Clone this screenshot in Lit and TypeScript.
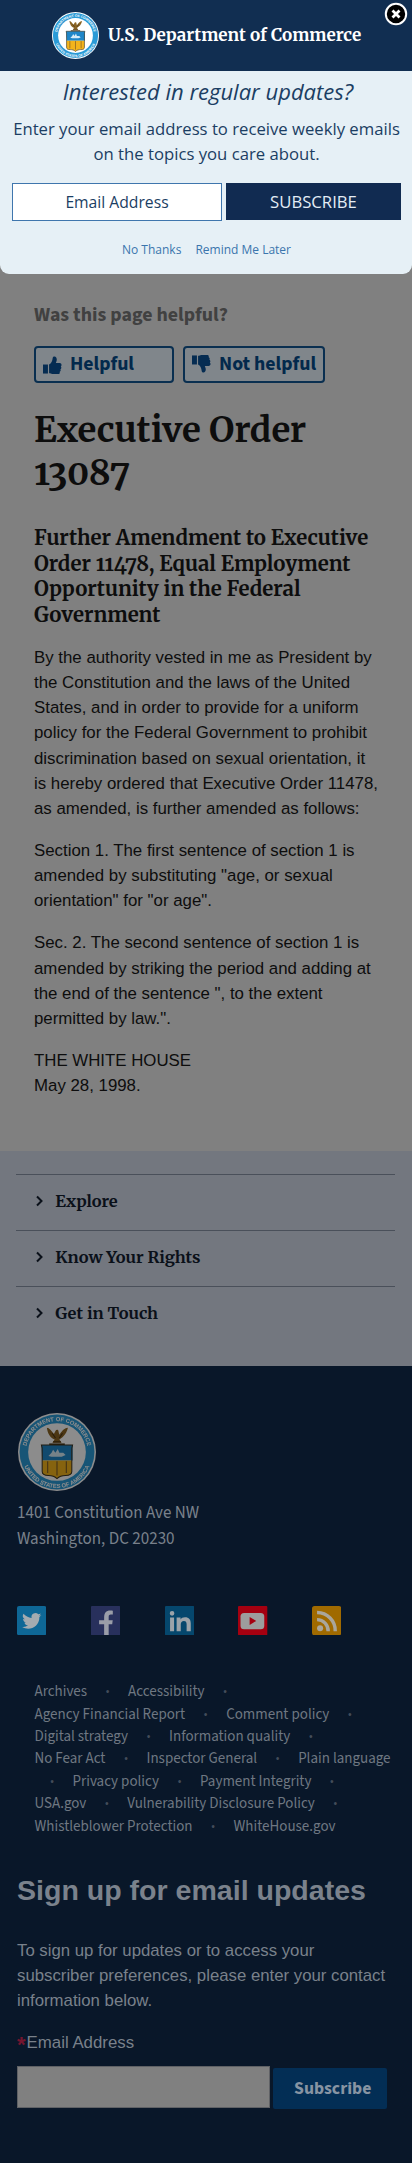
import { LitElement, html, css, svg } from "lit";
import { customElement } from "lit/decorators.js";

@customElement("commerce-seal")
class CommerceSeal extends LitElement {
  static styles = css`
    :host { display: block; flex: none; }
    svg { display: block; width: 100%; height: 100%; }
    .ring { font: bold 7.400px "Liberation Sans", sans-serif; fill: #fff; text-anchor: middle; }
  `;

  render() {
    return html`<svg viewBox="0 0 100 100" aria-label="Department of Commerce seal">
      <defs>
        <path id="top" d="M10.500 54a39.700 39.700 0 1 1 79 0" />
        <path id="bottom" d="M4.800 51a45.200 45.200 0 0 0 90.400 0" />
      </defs>
      <circle cx="50" cy="50" r="50" fill="#fff" />
      <circle cx="50" cy="50" r="48" fill="#2a9ad6" />
      <circle cx="50" cy="50" r="37" fill="#fff" />
      <text class="ring"><textPath href="#top" startOffset="50%">DEPARTMENT OF COMMERCE</textPath></text>
      <text class="ring"><textPath href="#bottom" startOffset="50%">UNITED STATES OF AMERICA</textPath></text>
      <path d="M37 19c3 0 6 4 9 8l2-4c1-2 4-2 4 1l1 4c3-4 6-9 11-9-1 4-3 9-7 12l-4 3 3 4H44l3-4c-6-2-9-8-10-15z" fill="#8a6424" />
      <path d="M44 26l4 6M57 26l-4 6M45 37h10" stroke="#4a3413" stroke-width="1.4" />
      <path d="M40 40h20" stroke="#4a3413" stroke-width="2" />
      <path d="M30 41h40v20H31z" fill="#1f86c8" />
      <path d="M31 61h38v14c0 4-3 5-8 5-4 0-8 1-11 4-3-3-7-4-11-4-5 0-8-1-8-5z" fill="#f3b41c" />
      <path d="M30 41h40l-1 4v30c0 4-3 5-8 5-4 0-8 1-11 4-3-3-7-4-11-4-5 0-8-1-8-5V45z" fill="none" stroke="#3d3420" stroke-width="1.3" />
      <path d="M39 55l4-4 2-4 3 4 3-5 2 5 5 0 3 3-5 2H43z" fill="#d7ecf8" />
      <path d="M50 62v18M38 62v15M62 62v15" stroke="#8a6424" stroke-width="1.6" />
    </svg>`;
  }
}

const thumb = svg`
  <path d="M0 8.500h5.200v9.500H0z" />
  <path d="M6.400 8.400C8.800 7.200 9.800 5 10.200 1.600 10.400.3 11.300 0 12 0c1.700 0 2.500 1.600 2.500 3.200 0 1.500-.6 2.600-1 3.800h4c1.300 0 2 1 2 1.900 0 .8-.4 1.300-.8 1.600.4.4.6.8.6 1.400 0 .9-.5 1.400-1 1.700.3.4.4.8.3 1.300-.1.7-.5 1.100-1 1.300.3 1.600-.5 2.800-2.600 2.800h-2.300c-2.400 0-4.100-1-5.500-1.200h-.8z" />
`;

const SECTIONS = ["Explore", "Know Your Rights", "Get in Touch"];

const DOT = "•";
const LINK_ROWS: string[][] = [
  ["Archives", DOT, "Accessibility", DOT],
  ["Agency Financial Report", DOT, "Comment policy", DOT],
  ["Digital strategy", DOT, "Information quality", DOT],
  ["No Fear Act", DOT, "Inspector General", DOT, "Plain language"],
  [DOT, "Privacy policy", DOT, "Payment Integrity", DOT],
  ["USA.gov", DOT, "Vulnerability Disclosure Policy", DOT],
  ["Whistleblower Protection", DOT, "WhiteHouse.gov"],
];

const SOCIAL = [
  svg`<rect width="29" height="29" rx="2" fill="#0e6796" />
    <path transform="translate(4.500 4.800) scale(.83)" fill="#a4abb0" d="M23.600 4.900c-.8.400-1.700.6-2.700.8 1-.6 1.700-1.500 2-2.600-.9.500-1.900.9-2.900 1.100a4.700 4.700 0 0 0-8 4.300C8.100 8.300 4.600 6.400 2.300 3.600a4.700 4.700 0 0 0 1.500 6.300c-.8 0-1.500-.2-2.100-.6 0 2.300 1.600 4.200 3.800 4.700-.7.200-1.400.2-2.100.1.600 1.800 2.300 3.200 4.400 3.200A9.500 9.500 0 0 1 .8 19.200C8.700 24.200 21.300 20 21.300 7.300c.9-.6 1.700-1.500 2.300-2.400z" />`,
  svg`<rect width="29" height="29" rx="1" fill="#28305c" />
    <path fill="#9a9da8" d="M13 29V18H8v-4h5v-2.500C13 7 15 4.500 19 4.500c1 0 2 .1 2.600.2v3.800h-2c-1.700 0-2.100.9-2.100 2.300V14h4l-.5 4h-3.500v11z" />`,
  svg`<rect width="29" height="29" rx="1" fill="#05476d" />
    <path fill="#9ba3a9" d="M5 11.500h4V25H5zM7 5a2.300 2.300 0 1 1 0 4.600A2.300 2.300 0 0 1 7 5zM11.500 11.500h3.900v1.800c.8-1.300 2.200-2.200 4.400-2.200 4 0 5.700 2.300 5.700 6.200V25h-4.100v-7c0-2-.8-3.200-2.700-3.200-2 0-3.100 1.300-3.100 3.300V25h-4.100z" />`,
  svg`<rect width="29" height="29" rx="1" fill="#a50010" />
    <rect x="2.500" y="7" width="23.500" height="16" rx="3.500" fill="#9d9d9d" />
    <path fill="#a50010" d="M11.500 10.800l6.500 4-6.500 4z" />`,
  svg`<rect width="29" height="29" rx="2.500" fill="#a06a00" />
    <circle cx="8" cy="22" r="3" fill="#aaa69c" />
    <path d="M5 13.500a11 11 0 0 1 11 11.500M5 6.500a18 18 0 0 1 18 18.500" fill="none" stroke="#aaa69c" stroke-width="3.400" />`,
];

@customElement("app-root")
class AppRoot extends LitElement {
  static styles = css`
    :host {
      display: flex;
      flex-direction: column;
      box-sizing: border-box;
      width: 100%;
      height: 2163px;
      background: #808080;
      color: #0d0d0d;
      font: 16.830px/25.200px "Liberation Sans", Arial, sans-serif;
    }
    * { box-sizing: border-box; }
    h1, h2, h3, p { margin: 0; padding: 0; }
    .banner { position: relative; height: 71px; flex: none; display: flex; align-items: flex-start; gap: 9px; padding: 12px 0 0 52px; background: #112e51; }
    .banner commerce-seal { width: 47px; height: 47px; }
    .brand { color: #fff; font: bold 17.100px/26px Merriweather, serif; padding-top: 10px; white-space: nowrap; }
    .close { position: absolute; right: 4px; top: 2px; width: 24px; height: 24px; }
    .popup { height: 203px; flex: none; background: #e6f0f6; border-radius: 0 0 9px 9px; text-align: center; color: #1b3e63; font-family: "Open Sans", sans-serif; padding: 5px 11px 0 12px; }
    .popup-title { font-size: 22px; line-height: 30px; font-style: italic; padding-left: 3px; }
    .popup-text { font-size: 16.700px; line-height: 25px; margin: 10px -4px 0; }
    .form { display: flex; gap: 4px; margin-top: 17px; height: 38px; }
    .field { width: 210px; background: #fff; border: 1px solid #3f76ad; font-size: 15.700px; line-height: 36px; }
    .cta { width: 175px; height: 37px; background: #112b51; color: #e4edf6; font-size: 16.700px; line-height: 37px; }
    .choices { display: flex; justify-content: center; gap: 14px; margin-top: 20px; font-size: 12px; line-height: 18px; color: #3a75ad; }
    main { padding: 26px 34px 0; height: 877px; flex: none; }
    .ask { font: bold 19.850px/30px "Source Sans 3", sans-serif; color: #414141; }
    .votes { display: flex; gap: 9px; margin-top: 16px; }
    .vote { display: flex; align-items: center; height: 37px; border: 2px solid #0a2f50; border-radius: 4px; background: #80868b; color: #03294c; font: bold 19.750px/33px "Source Sans 3", sans-serif; padding: 0 0 0 7px; gap: 8px; width: 140px; white-space: nowrap; }
    .vote.no { width: 142px; }
    .vote svg { width: 19px; height: 18px; fill: #052c52; margin-top: 1px; }
    .no svg { transform: scaleY(-1); margin-top: -1px; }
    h1 { font: bold 34.750px/43.400px Merriweather, serif; font-feature-settings: "onum"; margin-top: 25px; }
    h2 { font: bold 20.350px/25.500px Merriweather, serif; font-feature-settings: "onum"; margin-top: 31.500px; width: 350px; }
    .body { margin-top: 16.500px; display: flex; flex-direction: column; gap: 16.800px; margin-right: -1px; }
    nav { background: #73777f; height: 215px; flex: none; padding: 23px 17px 0 16px; }
    .section { display: flex; align-items: center; height: 55.750px; border-top: 1px solid #4a505a; padding: 0 0 2px 20px; gap: 12.300px; font: bold 16.400px/52px Merriweather, serif; color: #0a1019; }
    .section svg { width: 7px; height: 12px; }
    .chev { fill: none; stroke: #0a1019; stroke-width: 2; }
    footer { background: #091729; color: #79818b; flex: 1; padding: 46.500px 17px 0; }
    .seal { width: 78px; height: 78px; margin-left: 1px; filter: brightness(.55); }
    .address { font: 17px/26px "Source Sans 3", sans-serif; margin-top: 9px; }
    .social { display: flex; gap: 44.500px; margin-top: 54.500px; }
    .social svg { width: 29.300px; height: 29.300px; flex: none; }
    .links { margin: 46px 0 0 17.500px; font: 15px/22.400px "Source Sans 3", sans-serif; color: #6f7782; }
    .row { display: flex; height: 22.400px; white-space: nowrap; }
    .dot { width: 41px; text-align: center; font-size: 12px; color: #434c59; }
    .row .dot:first-child { width: 38px; padding-right: 3px; }
    h3 { font: bold 28.550px/34px "Liberation Sans", sans-serif; margin-top: 35px; color: #7b828c; }
    .intro { margin-top: 31px; white-space: nowrap; font-size: 16.770px; }
    .label { margin-top: 16.500px; }
    .star { color: #75152f; font-weight: bold; font-size: 22px; line-height: 20px; vertical-align: -4px; margin-right: 1px; }
    .signup { display: flex; gap: 2.500px; margin-top: 11px; }
    .input { width: 253px; height: 41.500px; background: #808080; border: 1px solid #5f6165; }
    .submit { width: 114.500px; height: 41.500px; margin-top: 1.500px; border-radius: 2px; background: #032e55; color: #8794a3; font: bold 17.700px/41px "Source Sans 3", sans-serif; text-align: center; padding-left: 6px; }
  `;

  render() {
    return html`
      <header class="banner">
        <commerce-seal></commerce-seal>
        <div class="brand">U.S. Department of Commerce</div>
        <svg class="close" viewBox="0 0 24 24" role="button" aria-label="Close">
          <circle cx="12" cy="12" r="10.200" fill="#000" stroke="#fff" stroke-width="2" />
          <path d="M8.500 8.500l7 7m0-7l-7 7" stroke="#fff" stroke-width="2.800" />
        </svg>
      </header>
      <section class="popup">
        <div class="popup-title">Interested in regular updates?</div>
        <p class="popup-text">Enter your email address to receive weekly emails<br />on the topics you care about.</p>
        <div class="form">
          <div class="field">Email Address</div>
          <div class="cta">SUBSCRIBE</div>
        </div>
        <div class="choices"><span>No Thanks</span><span>Remind Me Later</span></div>
      </section>
      <main>
        <div class="ask">Was this page helpful?</div>
        <div class="votes">
          <div class="vote"><svg viewBox="0 0 20 18">${thumb}</svg><span>Helpful</span></div>
          <div class="vote no"><svg viewBox="0 0 20 18">${thumb}</svg><span>Not helpful</span></div>
        </div>
        <h1>Executive Order 13087</h1>
        <h2>Further Amendment to Executive Order 11478, Equal Employment Opportunity in the Federal Government</h2>
        <div class="body">
          <p>By the authority vested in me as President by the Constitution and the laws of the United States, and in order to provide for a uniform policy for the Federal Government to prohibit discrimination based on sexual orientation, it is hereby ordered that Executive Order 11478, as amended, is further amended as follows:</p>
          <p>Section 1. The first sentence of section 1 is amended by substituting "age, or sexual orientation" for "or age".</p>
          <p>Sec. 2. The second sentence of section 1 is amended by striking the period and adding at the end of the sentence ", to the extent permitted by law.".</p>
          <p>THE WHITE HOUSE<br />May 28, 1998.</p>
        </div>
      </main>
      <nav>
        ${SECTIONS.map((name) => html`<div class="section">
          <svg viewBox="0 0 7 12"><path class="chev" d="M1 1.500l4.500 4.500L1 10.500" /></svg><span>${name}</span>
        </div>`)}
      </nav>
      <footer>
        <commerce-seal class="seal"></commerce-seal>
        <div class="address">1401 Constitution Ave NW<br />Washington, DC 20230</div>
        <div class="social">${SOCIAL.map((icon) => html`<svg viewBox="0 0 29 29">${icon}</svg>`)}</div>
        <div class="links">
          ${LINK_ROWS.map((row) => html`<div class="row">${row.map((item) => html`<span class=${item === DOT ? "dot" : "link"}>${item}</span>`)}</div>`)}
        </div>
        <h3>Sign up for email updates</h3>
        <p class="intro">To sign up for updates or to access your<br />subscriber preferences, please enter your contact<br />information below.</p>
        <div class="label"><span class="star">*</span>Email Address</div>
        <div class="signup">
          <div class="input"></div>
          <div class="submit">Subscribe</div>
        </div>
      </footer>
    `;
  }
}
